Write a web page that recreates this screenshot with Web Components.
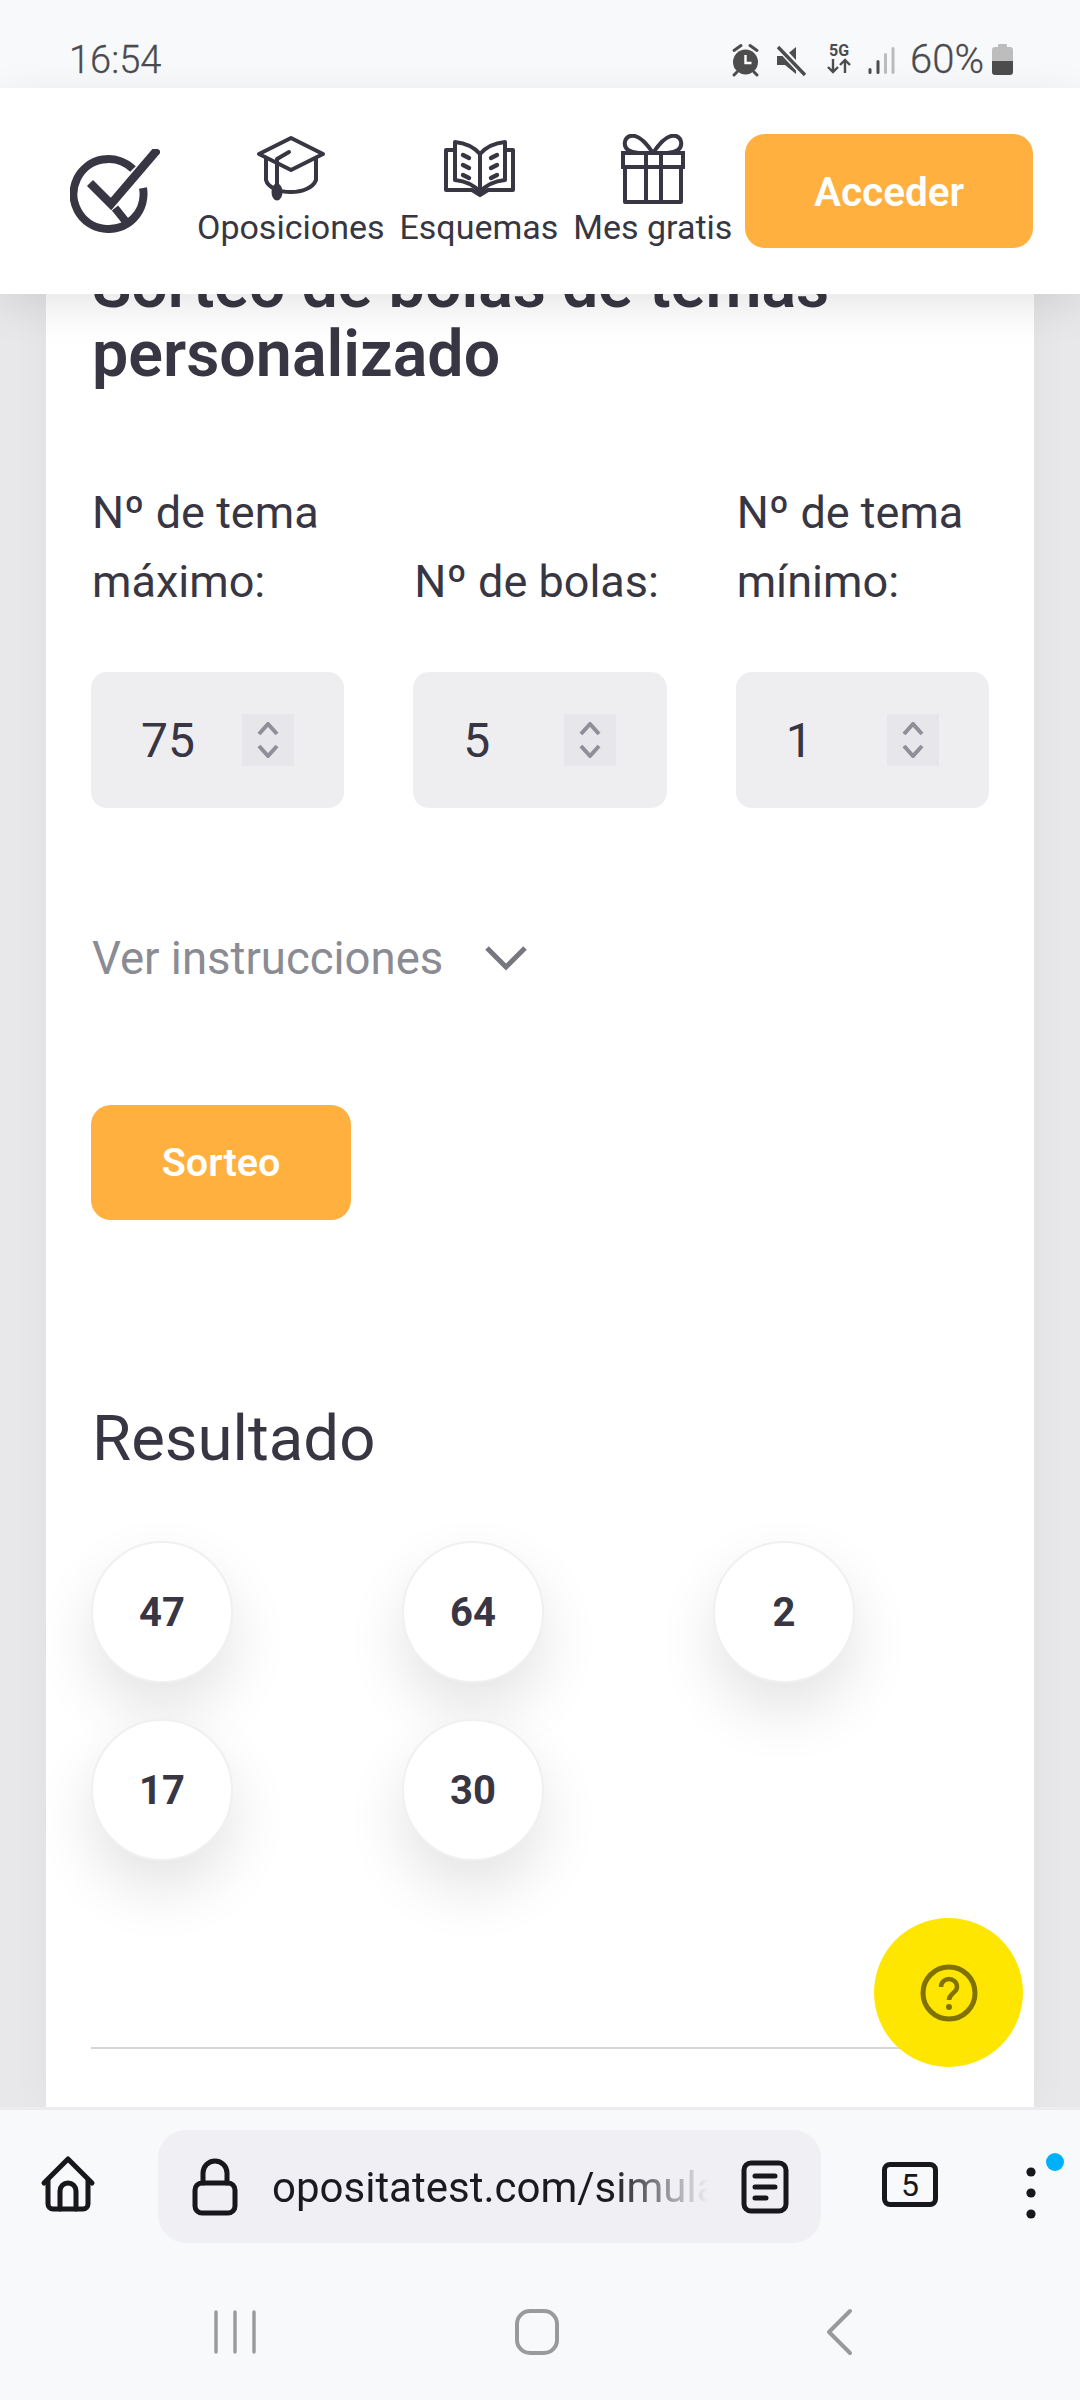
<!DOCTYPE html>
<html lang="es">
<head>
<meta charset="utf-8">
<title>Sorteo de bolas</title>
<style>
html,body{margin:0;padding:0;}
body{width:1080px;height:2400px;overflow:hidden;position:relative;display:flex;flex-direction:column;font-family:Roboto,"Noto Sans",sans-serif;color:#383642;background:#f8f9fb;}
</style>
</head>
<body>
<os-status></os-status>
<site-header></site-header>
<sorteo-page>
  <result-ball>47</result-ball>
  <result-ball>64</result-ball>
  <result-ball>2</result-ball>
  <result-ball>17</result-ball>
  <result-ball>30</result-ball>
</sorteo-page>
<browser-bar></browser-bar>
<android-nav></android-nav>
<help-fab></help-fab>

<script>
const define = (name, html) => {
    const template = document.createElement("template");
    template.innerHTML = html;
    customElements.define(name, class extends HTMLElement{
        constructor(){
            super();
            this.attachShadow({mode:"open"});
            this.shadowRoot.appendChild(template.content.cloneNode(true));
        }
    });
};

define("os-status", `
<style>
:host{display:flex;height:88px;background:#f8f9fb;color:#4b4b4f;font-family:Roboto,sans-serif;position:relative;}
.time{font-size:38px;margin:41px 0 0 69px;line-height:38px;font-weight:300;-webkit-text-stroke:.3px #4b4b4f;}
.icons{margin-left:auto;display:flex;padding-right:67px;height:88px;}
svg{display:block;}
.g{width:26px;margin:42px 0 0 20px;text-align:center;font-size:16px;line-height:17px;font-weight:700;}
.g svg{margin-top:-1px;}
.pct{font-size:40px;line-height:38px;margin:41px 8px 0 13px;font-weight:300;-webkit-text-stroke:.3px #4b4b4f;}
</style>
<div class="time">16:54</div>
<div class="icons">
  <svg width="75" height="88" viewBox="731 0 75 88">
    <circle cx="745.5" cy="62" r="12.5" fill="#4d4d4d"/>
    <path d="M741 45.5l-7 5M750 45.5l7 5M737 72l-3 3M754 72l3 3" stroke="#4d4d4d" stroke-width="3" stroke-linecap="round"/>
    <path d="M745.5 55v8h6" fill="none" stroke="#fff" stroke-width="2.4"/>
    <path d="M777 56h8l11-9v27l-11-9h-8z" fill="#4d4d4d"/>
    <path d="M779 47l26 28" stroke="#f8f9fb" stroke-width="7"/>
    <path d="M778 47l27 28" stroke="#4d4d4d" stroke-width="3.4"/>
  </svg>
  <div class="g">5G
    <svg width="26" height="16" viewBox="0 0 26 16" fill="none" stroke="#4d4d4d" stroke-width="2.4"><path d="M7 1v13M2 9l5 5 5-5M19 15V2M14 7l5-5 5 5"/></svg>
  </div>
  <svg width="31" height="88" viewBox="866 0 31 88" style="margin-left:14px">
    <rect x="868.5" y="68" width="3" height="6" rx="1.5" fill="#4d4d4d"/>
    <rect x="876.5" y="60" width="3" height="14" rx="1.5" fill="#4d4d4d"/>
    <rect x="884" y="53" width="3" height="21" rx="1.5" fill="#bcbcbc"/>
    <rect x="891.5" y="47" width="3" height="27" rx="1.5" fill="#bcbcbc"/>
  </svg>
  <div class="pct">60%</div>
  <svg width="21" height="88" viewBox="992 0 21 88">
    <path d="M998 47v-2a1 1 0 0 1 1-1h7a1 1 0 0 1 1 1v2h3a3 3 0 0 1 3 3v11h-21V50a3 3 0 0 1 3-3z" fill="#bdbdbd"/>
    <path d="M992 61h21v11a3 3 0 0 1-3 3h-15a3 3 0 0 1-3-3z" fill="#4d4d4d"/>
  </svg>
</div>
`);

define("nav-link", `
<style>
:host{display:flex;flex-direction:column;align-items:center;color:#383642;font-size:34px;line-height:44px;white-space:nowrap;}
::slotted(svg){display:block;height:78px;}
span{margin-top:-7px;}
</style>
<slot name="icon"></slot>
<span><slot></slot></span>
`);

define("site-header", `
<style>
:host{display:flex;height:206px;background:#fff;position:relative;z-index:2;box-shadow:0 12px 40px rgba(0,0,0,.1);font-family:Roboto,sans-serif;}
.logo{display:block;margin:61px 0 0 70px;}
nav{display:flex;margin:46px 0 0 37px;gap:15px;align-items:flex-start;}
svg.i{fill:none;stroke:#383642;stroke-width:4;stroke-linejoin:round;stroke-linecap:round;}
.btn{position:absolute;left:745px;top:46px;width:288px;height:114px;padding-top:2px;box-sizing:border-box;border-radius:20px;background:#ffb03f;color:#fff;font-weight:600;font-size:40.5px;display:flex;align-items:center;justify-content:center;}
</style>
<svg class="logo" width="90" height="84" viewBox="70 149 90 84" fill="none" stroke="#383642" stroke-width="8">
  <path d="M133 169A35 35 0 1 0 143 188"/>
  <path d="M90 183l21 21 47-55" stroke-width="8.5"/>
  <path d="M115 208l12 15" stroke-width="8"/>
</svg>
<nav>
  <nav-link>
    <svg slot="icon" class="i" width="72" height="78" viewBox="255 134 72 78">
      <path d="M291 138l32 16-32 16-32-16z"/>
      <path d="M266 158v22c2 8 14 12 25 12s22-4 25-12v-22"/>
      <path d="M289 152l-12 7v26"/>
      <ellipse cx="277" cy="192" rx="3.5" ry="6.5" fill="#383642"/>
    </svg>
    Oposiciones
  </nav-link>
  <nav-link>
    <svg slot="icon" class="i" width="72" height="78" viewBox="443 134 72 78">
      <path d="M455 142c10 1 19 5 25 12v38c-6-7-15-11-25-12z"/>
      <path d="M505 142c-10 1-19 5-25 12v38c6-7 15-11 25-12z"/>
      <path d="M454 150h-8v40h26l8 5 8-5h25v-40h-8"/>
      <path d="M463 155l6 3M463 165l6 3M463 175l6 3M497 155l-6 3M497 165l-6 3M497 175l-6 3" stroke-width="4.4"/>
    </svg>
    Esquemas
  </nav-link>
  <nav-link>
    <svg slot="icon" class="i" width="72" height="78" viewBox="616 134 72 78">
      <path d="M624 167v35h56v-35"/>
      <rect x="622" y="153" width="60" height="14" stroke-linejoin="miter"/>
      <path d="M645 153v49M660 153v49"/>
      <path d="M652 153c-8-12-16-19-23-17-6 2-7 10-2 14 3 2 7 3 11 3"/>
      <path d="M652 153c8-12 16-19 23-17 6 2 7 10 2 14-3 2-7 3-11 3"/>
    </svg>
    Mes gratis
  </nav-link>
</nav>
<div class="btn">Acceder</div>
`);

class NumberField extends HTMLElement{
    constructor(){
        super();
        this.attachShadow({mode:"open"});
        this.shadowRoot.innerHTML = `
<style>
:host{display:flex;flex-direction:column;justify-content:flex-end;}
.label{font-size:45px;line-height:69px;color:#383642;margin-bottom:56px;padding-left:1px;}
.box{height:136px;border-radius:16px;background:#eeeef1;display:flex;align-items:center;padding-left:50px;position:relative;font-size:48px;color:#383642;}
.spin{position:absolute;left:151px;top:42px;width:52px;height:52px;background:#e6e6eb;}
svg{display:block;margin:8px auto 0;}
</style>
<div class="label"></div>
<div class="box">
  <span class="val"></span>
  <div class="spin"><svg width="24" height="36" viewBox="0 0 24 36" fill="none" stroke="#8f8f9a" stroke-width="4"><path d="M3 12l9-10 9 10M3 24l9 10 9-10"/></svg></div>
</div>`;
    }
    connectedCallback(){
        this.shadowRoot.querySelector(".label").innerHTML = this.dataset.label;
        this.shadowRoot.querySelector(".val").textContent = this.dataset.value;
    }
}
customElements.define("number-field", NumberField);

define("result-ball", `
<style>
:host{display:flex;width:142px;height:142px;box-sizing:border-box;border-radius:50%;background:#fff;border:2px solid #f0f0f0;box-shadow:0 28px 60px rgba(0,0,0,.11);align-items:center;justify-content:center;font-weight:700;font-size:40px;color:#383642;padding-top:1px;}
</style>
<slot></slot>
`);

define("sorteo-page", `
<style>
:host{display:block;flex:1;min-height:0;overflow:hidden;background:#e8e8ea;padding:0 46px 0 46px;font-family:Roboto,sans-serif;}
.card{display:flow-root;height:100%;background:#fff;padding:0 45px 0 45px;box-sizing:border-box;box-shadow:0 0 40px rgba(0,0,0,.04);}
h1{margin:-43px 0 0 1px;font-size:64.5px;line-height:69px;font-weight:600;color:#383642;}
.fields{display:grid;grid-template-columns:repeat(3,1fr);gap:69px;margin-top:89px;}
.more{display:flex;align-items:center;margin:120px 0 0 1px;height:60px;font-size:45.5px;color:#8b8b93;}
.more svg{margin-left:42px;}
.sorteo{margin-top:117px;width:260px;height:115px;border-radius:20px;background:#ffb03f;color:#fff;font-weight:600;font-size:39.5px;display:flex;align-items:center;justify-content:center;}
h2{margin:184px 0 0 1px;font-size:63.5px;line-height:70px;font-weight:400;color:#383642;}
.balls{display:grid;grid-template-columns:repeat(3,142px);column-gap:169px;row-gap:36px;margin-top:67px;}
hr{border:0;height:2px;background:#d6d6d8;margin:186px 0 0;}
</style>
<div class="card">
  <h1>Sorteo de bolas de temas personalizado</h1>
  <div class="fields">
    <number-field data-label="Nº de tema máximo:" data-value="75"></number-field>
    <number-field data-label="Nº de bolas:" data-value="5"></number-field>
    <number-field data-label="Nº de tema mínimo:" data-value="1"></number-field>
  </div>
  <div class="more">Ver instrucciones
    <svg width="42" height="26" viewBox="0 0 42 26" fill="none" stroke="#77777f" stroke-width="5"><path d="M2 3l19 19L40 3"/></svg>
  </div>
  <div class="sorteo">Sorteo</div>
  <h2>Resultado</h2>
  <div class="balls"><slot></slot></div>
  <hr>
</div>
`);

define("help-fab", `
<style>
:host{position:absolute;left:874px;top:1918px;width:149px;height:149px;border-radius:50%;background:#ffe600;z-index:3;display:flex;align-items:center;justify-content:center;}
</style>
<svg width="60" height="60" viewBox="0 0 60 60" fill="none" stroke="#7f7200" stroke-width="5">
  <circle cx="30" cy="30" r="26"/>
  <path d="M22 24c0-5 4-8 8-8s8 3 8 8c0 6-8 6-8 13" stroke-width="4.5"/>
  <circle cx="30" cy="44" r="3" fill="#7f7200" stroke="none"/>
</svg>
`);

define("browser-bar", `
<style>
:host{display:flex;height:183px;box-sizing:border-box;border-top:3px solid #ececef;background:#f8f9fb;position:relative;z-index:2;font-family:Roboto,sans-serif;}
svg{display:block;fill:none;stroke:#17171c;stroke-width:5;stroke-linejoin:round;stroke-linecap:round;}
.home{margin:45px 0 0 40px;}
.pill{margin:20px 0 0 62px;width:663px;height:113px;border-radius:28px;background:#efeff4;display:flex;align-items:center;}
.lock{margin-left:33px;}
.url{margin-left:33px;padding-top:2px;width:436px;overflow:hidden;white-space:nowrap;font-size:42px;color:#1a1a20;-webkit-mask-image:linear-gradient(90deg,#000 78%,transparent 100%);mask-image:linear-gradient(90deg,#000 78%,transparent 100%);}
.reader{margin-left:33px;}
.tabs{margin:52px 0 0 61px;width:56px;height:45px;box-sizing:border-box;border:5px solid #17171c;border-radius:8px;display:flex;align-items:center;justify-content:center;font-size:32px;color:#17171c;}
.menu{position:absolute;left:1024px;top:38px;}
</style>
<svg class="home" width="56" height="58" viewBox="0 0 56 58">
  <path d="M4 28L28 4l24 24"/>
  <path d="M8 25v24a5 5 0 0 0 5 5h30a5 5 0 0 0 5-5V25"/>
  <path d="M20 54V36a8 8 0 0 1 16 0v18"/>
</svg>
<div class="pill">
  <svg class="lock" width="48" height="60" viewBox="0 0 48 60">
    <rect x="4" y="26" width="40" height="30" rx="7"/>
    <path d="M12 26V16a12 12 0 0 1 24 0v10"/>
  </svg>
  <div class="url">opositatest.com/simulacros</div>
  <svg class="reader" width="48" height="54" viewBox="0 0 48 54">
    <rect x="3" y="3" width="42" height="48" rx="7"/>
    <path d="M14 16h20M14 27h20M14 38h11" stroke-width="5"/>
  </svg>
</div>
<div class="tabs">5</div>
<svg class="menu" width="44" height="72" viewBox="0 0 44 72" style="stroke:none">
  <circle cx="7" cy="24" r="4.6" fill="#17171c"/>
  <circle cx="7" cy="45" r="4.6" fill="#17171c"/>
  <circle cx="7" cy="66" r="4.6" fill="#17171c"/>
  <circle cx="31" cy="14" r="9" fill="#00b0f8"/>
</svg>
`);

define("android-nav", `
<style>
:host{display:grid;grid-template-columns:repeat(3,302px);justify-content:center;padding-right:6px;height:110px;background:#f8f9fb;position:relative;z-index:2;}
svg{display:block;margin:18px auto 0;fill:none;stroke:#9a9a9a;stroke-width:3.4;stroke-linecap:round;stroke-linejoin:round;}
</style>
<svg width="44" height="48" viewBox="0 0 44 48"><path d="M3 4v40M22 4v40M41 4v40"/></svg>
<svg width="46" height="48" viewBox="0 0 46 48"><rect x="3" y="3" width="40" height="42" rx="13" stroke-width="4"/></svg>
<svg width="28" height="48" viewBox="0 0 28 48"><path d="M25 3L4 24l21 21" stroke-width="4"/></svg>
`);
</script>
</body>
</html>
